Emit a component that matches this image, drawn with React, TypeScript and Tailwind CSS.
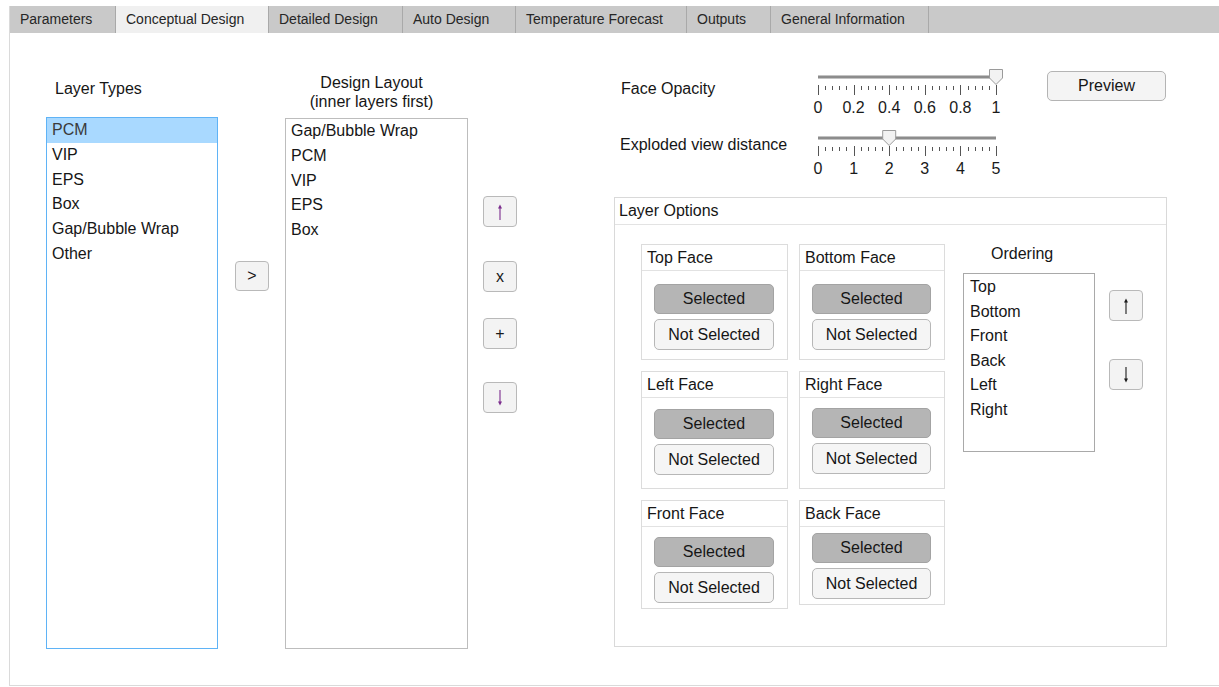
import React from "react";

const tabs: { label: string; cls: string; active?: boolean }[] = [
  { label: "Parameters", cls: "w-[106px]" },
  { label: "Conceptual Design", cls: "w-[153px]", active: true },
  { label: "Detailed Design", cls: "w-[134px]" },
  { label: "Auto Design", cls: "w-[113px]" },
  { label: "Temperature Forecast", cls: "w-[171px]" },
  { label: "Outputs", cls: "w-[84px]" },
  { label: "General Information", cls: "w-[158px]" },
];

function TabBar() {
  return (
    <div className="flex h-[27px] bg-[#c9c9c9] text-[14px] leading-[27px] text-[#262626]">
      {tabs.map((t) => (
        <div
          key={t.label}
          className={`${t.cls} shrink-0 border-r border-[#a9a9a9] pl-[10px] ${
            t.active ? "bg-[#f0f0f0]" : ""
          }`}
        >
          {t.label}
        </div>
      ))}
    </div>
  );
}

// Thin vertical arrow used on the move up / move down buttons
function Arrow({ dir, color }: { dir: "up" | "down"; color: string }) {
  const up = dir === "up";
  return (
    <svg width="10" height="18" viewBox="0 0 10 18">
      <line x1="5" y1={up ? 4 : 1} x2="5" y2={up ? 17 : 14} stroke={color} strokeWidth="1.1" />
      <polygon
        points={up ? "5,1.5 3,5.5 7,5.5" : "5,16.5 3,12.5 7,12.5"}
        fill={color}
      />
    </svg>
  );
}

function SmallBtn({
  children,
  tone = "text-[#1a1a1a]",
}: {
  children: React.ReactNode;
  tone?: string;
}) {
  return (
    <div
      className={`flex h-[31px] w-[34px] items-center justify-center rounded-[4px] border border-[#b9b9b9] bg-[#f3f3f3] text-[16px] ${tone}`}
    >
      {children}
    </div>
  );
}

// Horizontal slider with a tick scale and numeric labels underneath
function Slider({ value, labels }: { value: number; labels: string[] }) {
  const x0 = 10;
  const len = 178;
  const ticks = Array.from({ length: 26 }, (_, i) => i);
  const cx = x0 + value * len;
  return (
    <svg width="200" height="50" className="shrink-0">
      <line x1={x0} y1={10} x2={x0 + len} y2={10} stroke="#d6d6d6" strokeWidth={4} />
      <line x1={x0} y1={10} x2={x0 + len} y2={10} stroke="#8c8c8c" strokeWidth={2.5} />
      {ticks.map((i) => {
        const x = Math.round(x0 + (i * len) / 25) + 0.5;
        const major = i % 5 === 0;
        return (
          <line
            key={i}
            x1={x}
            y1={major ? 18 : 19}
            x2={x}
            y2={major ? 28 : 23}
            stroke="#555"
            strokeWidth={1}
          />
        );
      })}
      {labels.map((l, i) => (
        <text
          key={l}
          x={x0 + (i * len) / (labels.length - 1)}
          y={46}
          textAnchor="middle"
          fontSize="16"
          fontFamily="'Liberation Sans', Arial, sans-serif"
          fill="#1a1a1a"
        >
          {l}
        </text>
      ))}
      <polygon
        points={`${cx - 6.5},2.5 ${cx + 6.5},2.5 ${cx + 6.5},11 ${cx},17.5 ${cx - 6.5},11`}
        fill="#f2f2f2"
        stroke="#9a9a9a"
        strokeWidth={1}
      />
    </svg>
  );
}

function FacePanel({
  title,
  width,
  body,
}: {
  title: string;
  width: string;
  body: string;
}) {
  return (
    <div className={`${width} shrink-0 border border-[#dcdcdc] bg-white`}>
      <div className="flex h-[26px] items-center border-b border-[#e2e2e2] pl-[5px] leading-[19px]">
        {title}
      </div>
      <div className={`flex flex-col gap-[5px] pl-[12px] pr-[13px] ${body}`}>
        <div className="flex h-[30px] items-center justify-center rounded-[5px] border border-[#a3a3a3] bg-[#b5b5b5]">
          Selected
        </div>
        <div className="flex h-[31px] items-center justify-center rounded-[5px] border border-[#b7b7b7] bg-[#f5f5f5]">
          Not Selected
        </div>
      </div>
    </div>
  );
}

export default function App() {
  const layerTypes = ["PCM", "VIP", "EPS", "Box", "Gap/Bubble Wrap", "Other"];
  const layout = ["Gap/Bubble Wrap", "PCM", "VIP", "EPS", "Box"];
  const ordering = ["Top", "Bottom", "Front", "Back", "Left", "Right"];

  return (
    <div className="h-[687px] w-[1219px] overflow-hidden bg-white pt-[6px] font-['Liberation_Sans',Arial,sans-serif] text-[16px] text-[#161616]">
      <div className="ml-[9px] h-[680px] border-b border-l border-[#dadada]">
        <TabBar />

        <div className="flex items-start">
          {/* Layer types */}
          <div className="ml-[36px] mt-[46px] w-[172px] shrink-0">
            <div className="h-[19px] pl-[9px] leading-[19px]">Layer Types</div>
            <div className="mt-[19px] h-[532px] border border-[#5fb3f6] bg-white">
              {layerTypes.map((t, i) => (
                <div
                  key={t}
                  className={`h-[24.8px] pl-[5px] leading-[24.8px] ${
                    i === 0 ? "bg-[#a9d9ff] text-[#3a3a3a]" : ""
                  }`}
                >
                  {t}
                </div>
              ))}
            </div>
          </div>

          <div className="ml-[17px] mt-[228px] shrink-0">
            <div className="flex h-[30px] w-[34px] items-center justify-center rounded-[4px] border border-[#b9b9b9] bg-[#f3f3f3]">
              &gt;
            </div>
          </div>

          {/* Design layout */}
          <div className="ml-[16px] mt-[40px] w-[183px] shrink-0">
            <div className="w-[173px] text-center leading-[19px]">
              Design Layout
              <br />
              (inner layers first)
            </div>
            <div className="mt-[7px] h-[531px] border border-[#bdbdbd] bg-white pl-[5px]">
              {layout.map((t) => (
                <div key={t} className="h-[24.8px] leading-[24.8px]">
                  {t}
                </div>
              ))}
            </div>
          </div>

          <div className="ml-[15px] mt-[163px] flex shrink-0 flex-col">
            <SmallBtn>
              <Arrow dir="up" color="#7a2b8c" />
            </SmallBtn>
            <div className="mt-[34px]">
              <SmallBtn>x</SmallBtn>
            </div>
            <div className="mt-[26px]">
              <SmallBtn>+</SmallBtn>
            </div>
            <div className="mt-[33px]">
              <SmallBtn>
                <Arrow dir="down" color="#7a2b8c" />
              </SmallBtn>
            </div>
          </div>

          {/* View controls and layer options */}
          <div className="ml-[97px] mt-[34px] w-[553px] shrink-0">
            <div className="flex items-start">
              <div className="w-[194px] shrink-0 pl-[7px] pt-[12px] leading-[19px]">
                Face Opacity
              </div>
              <Slider value={1} labels={["0", "0.2", "0.4", "0.6", "0.8", "1"]} />
              <div className="ml-[39px] mt-[4px] flex h-[30px] w-[119px] items-center justify-center rounded-[5px] border border-[#b4b4b4] bg-[#f4f4f4]">
                Preview
              </div>
            </div>
            <div className="mt-[11px] flex items-start">
              <div className="w-[194px] shrink-0 pl-[6px] pt-[7px] leading-[19px]">
                Exploded view distance
              </div>
              <Slider value={0.4} labels={["0", "1", "2", "3", "4", "5"]} />
            </div>

            <div className="mt-[19px] h-[450px] border border-[#d9d9d9] bg-white">
              <div className="flex h-[27px] items-center border-b border-[#e3e3e3] pl-[4px]">
                Layer Options
              </div>
              <div className="flex items-start pl-[26px] pt-[19px]">
                <div className="flex flex-col gap-[11px]">
                  <div className="flex items-start gap-[11px]">
                    <FacePanel title="Top Face" width="w-[147px]" body="pt-[13px] pb-[9px]" />
                    <FacePanel title="Bottom Face" width="w-[146px]" body="pt-[13px] pb-[9px]" />
                  </div>
                  <div className="flex items-start gap-[11px]">
                    <FacePanel title="Left Face" width="w-[147px]" body="pt-[11px] pb-[13px]" />
                    <FacePanel title="Right Face" width="w-[146px]" body="pt-[10px] pb-[14px]" />
                  </div>
                  <div className="flex items-start gap-[11px]">
                    <FacePanel title="Front Face" width="w-[147px]" body="pt-[10px] pb-[5px]" />
                    <FacePanel title="Back Face" width="w-[146px]" body="pt-[6px] pb-[5px]" />
                  </div>
                </div>

                <div className="ml-[18px] w-[132px] shrink-0">
                  <div className="h-[19px] pl-[28px] leading-[19px]">Ordering</div>
                  <div className="mt-[10px] h-[179px] border border-[#a9a9a9] bg-white pl-[6px] pt-[1px]">
                    {ordering.map((t) => (
                      <div key={t} className="h-[24.6px] leading-[24.6px]">
                        {t}
                      </div>
                    ))}
                  </div>
                </div>

                <div className="ml-[14px] mt-[46px] flex shrink-0 flex-col">
                  <SmallBtn>
                    <Arrow dir="up" color="#1a1a1a" />
                  </SmallBtn>
                  <div className="mt-[38px]">
                    <SmallBtn>
                      <Arrow dir="down" color="#1a1a1a" />
                    </SmallBtn>
                  </div>
                </div>
              </div>
            </div>
          </div>
        </div>
      </div>
    </div>
  );
}
